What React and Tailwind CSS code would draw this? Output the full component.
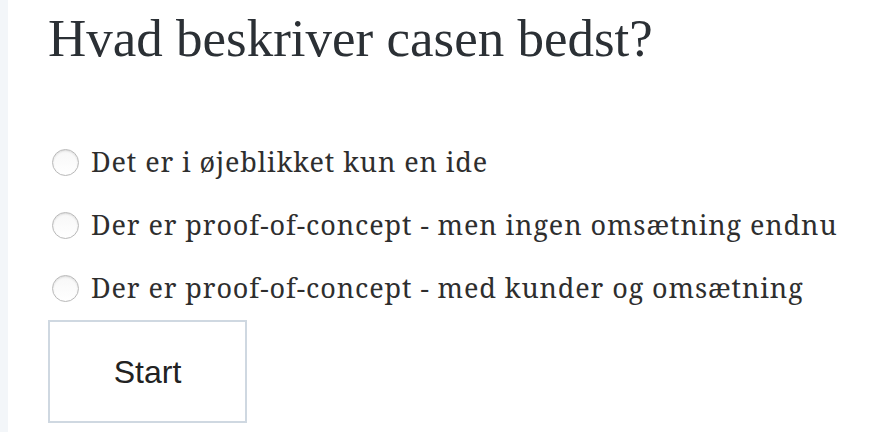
export default function App() {
  const options = [
    "Det er i øjeblikket kun en ide",
    "Der er proof-of-concept - men ingen omsætning endnu",
    "Der er proof-of-concept - med kunder og omsætning",
  ];
  return (
    <div className="flex h-[432px] w-[874px] overflow-hidden bg-white">
      <div className="w-[8px] shrink-0 bg-[#f3f6f9]" />
      <div className="flex flex-col pl-[40px] pt-[12px]">
        <h1 className="text-[53px] leading-none text-[#2b3035] [font-family:'Liberation_Serif',serif]">
          Hvad beskriver casen bedst?
        </h1>
        <div className="mt-[66px] flex flex-col">
          {options.map((o) => (
            <label key={o} className="flex h-[63px] items-center">
              <span className="ml-[4px] h-[27px] w-[27px] shrink-0 rounded-full border border-[#b9b9b9] bg-gradient-to-b from-[#f7f7f7] to-[#ffffff] shadow-[inset_0_1px_2px_rgba(0,0,0,0.12)]" />
              <span className="ml-[12px] text-[27px] tracking-[0.9px] text-[#2e2e2e] [font-family:'Noto_Serif','DejaVu_Serif',serif]">
                {o}
              </span>
            </label>
          ))}
        </div>
        <button className="flex h-[103px] w-[199px] items-center justify-center border-2 border-[#cfd8e1] bg-white text-[32px] text-[#222] [font-family:'Liberation_Sans',Arial,sans-serif]">
          Start
        </button>
      </div>
    </div>
  );
}
